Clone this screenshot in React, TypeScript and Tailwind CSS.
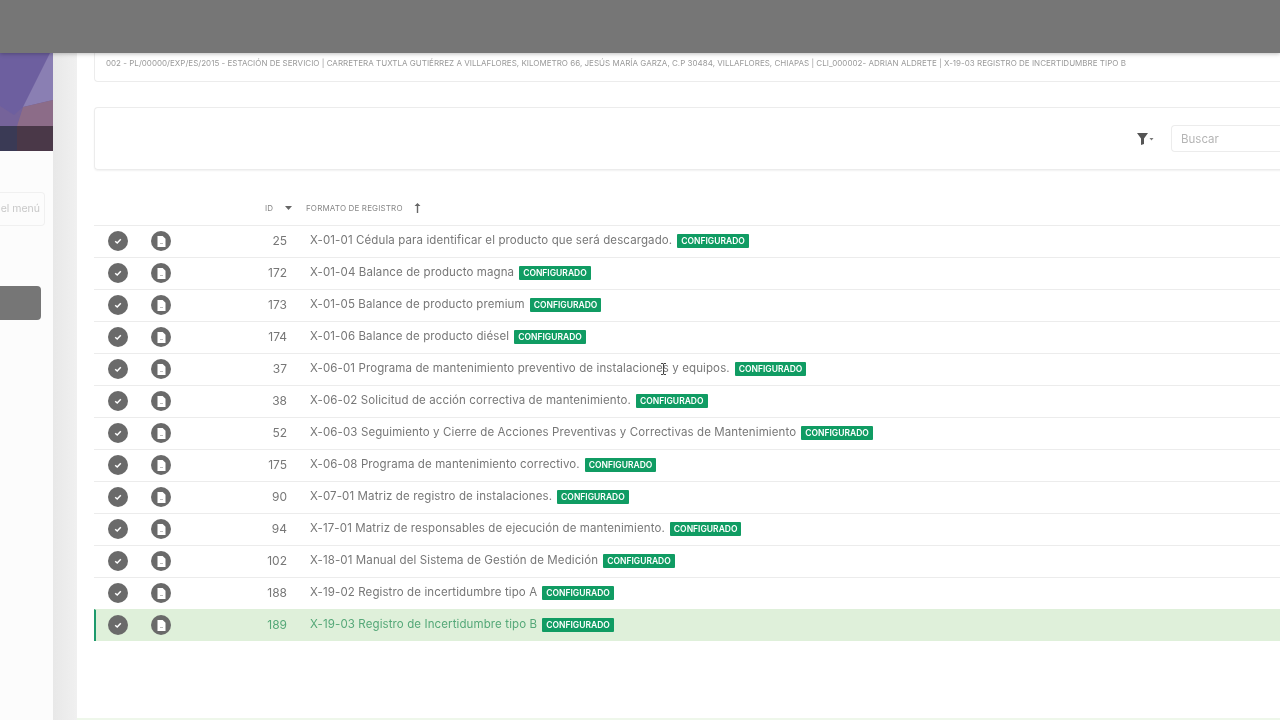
import React from "react";

const rows = [
  { id: 25, text: "X-01-01 Cédula para identificar el producto que será descargado." },
  { id: 172, text: "X-01-04 Balance de producto magna" },
  { id: 173, text: "X-01-05 Balance de producto premium" },
  { id: 174, text: "X-01-06 Balance de producto diésel" },
  { id: 37, text: "X-06-01 Programa de mantenimiento preventivo de instalaciones y equipos." },
  { id: 38, text: "X-06-02 Solicitud de acción correctiva de mantenimiento." },
  { id: 52, text: "X-06-03 Seguimiento y Cierre de Acciones Preventivas y Correctivas de Mantenimiento" },
  { id: 175, text: "X-06-08 Programa de mantenimiento correctivo." },
  { id: 90, text: "X-07-01 Matriz de registro de instalaciones." },
  { id: 94, text: "X-17-01 Matriz de responsables de ejecución de mantenimiento." },
  { id: 102, text: "X-18-01 Manual del Sistema de Gestión de Medición" },
  { id: 188, text: "X-19-02 Registro de incertidumbre tipo A" },
  { id: 189, text: "X-19-03 Registro de Incertidumbre tipo B", active: true },
];

const CheckIcon = () => (
  <span className="flex h-5 w-5 items-center justify-center rounded-full bg-[#6a6a6a]">
    <svg width="10" height="10" viewBox="0 0 10 10" fill="none" stroke="#fff" strokeWidth="1.5">
      <path d="M2.2 5.2 4.2 7 7.8 3.2" />
    </svg>
  </span>
);

const DocIcon = () => (
  <span className="flex h-5 w-5 items-center justify-center rounded-full bg-[#6a6a6a]">
    <svg width="9" height="11" viewBox="0 0 9 11">
      <path d="M.5 0h5.2L8.5 2.8V11H.5z" fill="#fff" />
      <path d="M3 7.5h3" stroke="#bbb" strokeWidth="1" />
    </svg>
  </span>
);

const Row = ({ id, text, active }: { id: number; text: string; active?: boolean }) => (
  <div
    className={`flex h-8 items-center border-t pb-px ${
      active
        ? "border-t-[#dff0da] border-l-2 border-l-[#1d9a6c] bg-[#dff0da] text-[#55a878]"
        : "border-[#ececec] text-[#777777]"
    }`}
  >
    <div className={`flex w-5 shrink-0 justify-center ${active ? "ml-[12px]" : "ml-[14px]"}`}>
      <CheckIcon />
    </div>
    <div className="ml-[23px] w-5 shrink-0">
      <DocIcon />
    </div>
    <div className="w-[116px] shrink-0 text-right text-[12px]">{id}</div>
    <div className="ml-[23px] flex items-center gap-[5px] whitespace-nowrap text-[11.5px] tracking-[0.11px]">
      <span>{text}</span>
      <span className="rounded-[1px] bg-[#109c63] px-1 py-px text-[8.5px] font-semibold leading-[12px] tracking-normal text-white">
        CONFIGURADO
      </span>
    </div>
  </div>
);

export default function App() {
  return (
    <div className="relative flex h-[720px] w-[1280px] flex-col overflow-hidden bg-white font-['Inter',sans-serif] blur-[0.4px]">
      <div className="relative z-10 h-[53px] shrink-0 bg-[#767676] shadow-[0_1px_4px_rgba(0,0,0,0.25)]" />
      <div className="flex min-h-0 flex-1">
        <aside className="w-[53px] shrink-0 bg-[#fcfcfc]">
          <svg width="53" height="98" viewBox="0 0 53 98" className="block">
            <rect width="53" height="98" fill="#6d5f9f" />
            <polygon points="50,0 53,0 53,47 23,54" fill="#8a7fb3" />
            <polygon points="0,53 14,62 23,54 17,73 0,73" fill="#75639a" />
            <polygon points="17,73 23,54 53,47 53,73" fill="#8c6c88" />
            <rect y="73" width="53" height="25" fill="#3a3a55" />
            <rect x="17" y="73" width="36" height="25" fill="#4a3848" />
          </svg>
          <div className="mt-[41px] mr-2 flex h-[34px] items-center justify-end rounded-r border border-l-0 border-[#f0f0f0] pr-1 text-[10.5px] text-[#c8c8c8]">
            el menú
          </div>
          <div className="mt-[60px] mr-3 h-[34px] rounded-r bg-[#767676]" />
        </aside>
        <div className="w-6 shrink-0 bg-gradient-to-r from-[#e8e8e8] to-[#f0f0f0]" />
        <main className="min-w-0 flex-1 border-b-2 border-[#eef7ea] pl-[17px]">
          <div className="-mr-4 flex h-[29px] items-center rounded-bl border-b border-l border-[#ececec] pb-[9px] pl-3">
            <span className="-ml-px whitespace-nowrap text-[8px] tracking-[0.015px] text-[#9a9a9a]">
              002 - PL/00000/EXP/ES/2015 - ESTACIÓN DE SERVICIO | CARRETERA TUXTLA GUTIÉRREZ A VILLAFLORES, KILOMETRO 66, JESÚS MARÍA GARZA, C.P 30484, VILLAFLORES, CHIAPAS | CLI_000002- ADRIAN ALDRETE | X-19-03 REGISTRO DE INCERTIDUMBRE TIPO B
            </span>
          </div>
          <div className="-mr-4 mt-[25px] flex h-[63px] items-center justify-end rounded-l border border-r-0 border-[#ececec] shadow-[0_1px_2px_rgba(0,0,0,0.06)]">
            <svg width="18" height="12" viewBox="0 0 18 12" className="mr-4">
              <path d="M0 0h11L7 5.5V11L4 12V5.5z" fill="#555" />
              <path d="M12.5 5h4L14.5 7.5z" fill="#777" />
            </svg>
            <div className="flex h-[27px] w-[125px] items-center rounded-l border border-r-0 border-[#ececec] pt-0.5 pl-[9px] text-[11.5px] text-[#b5b5b5]">
              Buscar
            </div>
          </div>
          <div className="mt-[25px] flex h-[30px] items-center pb-1 text-[8px] text-[#888888]">
            <span className="ml-[171px] w-[20px]">ID</span>
            <svg width="7" height="4" viewBox="0 0 7 4" className="mr-[14px]">
              <path d="M0 0h7L3.5 4z" fill="#666" />
            </svg>
            <span className="tracking-[0.15px]">FORMATO DE REGISTRO</span>
            <svg width="7" height="10" viewBox="0 0 7 10" className="ml-[11px]">
              <path d="M3.5 0 6.5 3H4.2V10H2.8V3H.5z" fill="#666" />
            </svg>
          </div>
          {rows.map((r) => (
            <Row key={r.id} id={r.id} text={r.text} active={r.active} />
          ))}
        </main>
      </div>
      <svg width="7" height="12" viewBox="0 0 7 12" className="absolute top-[363px] left-[660px]">
        <path d="M1 .5h2l.5.5.5-.5h2M3.500 1v10M1 11.500h2l.5-.5.5.5h2" fill="none" stroke="#444" strokeWidth="1" />
      </svg>
    </div>
  );
}
